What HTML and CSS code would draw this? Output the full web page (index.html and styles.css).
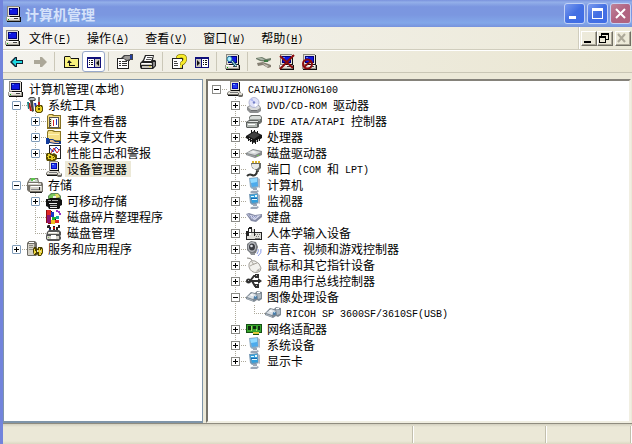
FILE: index.html
```html
<!DOCTYPE html>
<html lang="zh-CN">
<head>
  <meta charset="UTF-8" />
  <meta name="viewport" content="width=device-width, initial-scale=1.0"/>
  <title>计算机管理</title>
  <link rel="stylesheet" href="styles.css">
</head>
<body>
  <svg class="sprites" aria-hidden="true">
    <symbol id="pc" viewBox="0 0 16 16">
      <path fill="#8a887f" d="M1 0h12v11H1z"/>
      <path fill="#e4e1d8" d="M2 1h11v9H2z"/>
      <path fill="#111" d="M13 1h1v10h-1zM4 10h9v1H4z"/>
      <path fill="#00007c" d="M3 2h9v7H3z"/>
      <path fill="#1018e0" d="M4 3h7v5H4z"/>
      <path fill="#5080ff" d="M4 3h2v1H4z"/>
      <path fill="#9b998f" d="M0 11h14v4H0z"/>
      <path fill="#e4e1d8" d="M1 12h12v2H1z"/>
      <path fill="#fff" d="M1 11h12v1H1z"/>
      <path fill="#444" d="M8 12h4v1H8z"/>
      <path fill="#111" d="M14 11h1v5h-1zM1 15h14v1H1z"/>
      <path fill="#0a0" d="M2 13h1v1H2z"/>
    </symbol>
    <symbol id="devmgr" viewBox="0 0 16 16">
      <path fill="#8a887f" d="M3 0h9v10H3z"/>
      <path fill="#e4e1d8" d="M4 1h8v8H4z"/>
      <path fill="#111" d="M12 1h1v9h-1zM4 9h8v1H4z"/>
      <path fill="#0008b8" d="M5 2h6v6H5z"/>
      <path fill="#2438f0" d="M6 3h4v4H6z"/>
      <path fill="#7ab0ff" d="M6 3h2v1H6z"/>
      <path fill="#77756e" d="M2 10h11l1 2v2H0v-2z"/>
      <path fill="#dedbd2" d="M3 10h9l1 2H1z"/>
      <path fill="#777" d="M3 11h8v1H3z"/>
      <path fill="#111" d="M1 14h11v1H1z"/>
      <path fill="#e9e7e0" d="M1 12h10v1H1z"/>
      <path fill="#6e6c66" d="M11 12h4l1 1v2l-1 1h-3l-1-1z"/>
      <path fill="#dedbd2" d="M12 12h3v2h-3z"/>
    </symbol>
    <symbol id="tools" viewBox="0 0 16 16">
      <path fill="#444" d="M1 2l2-2h4l2 2-1 2H6l1 10-2 1-2-11z"/>
      <path fill="#b9c0c5" d="M2 2l2-1h3l1 1-1 1H4L2 3z"/>
      <path fill="#c01818" d="M1 6h2l2 8H3zM11 5h2v3h-2z"/>
      <path fill="#178080" d="M0 5h2v7H1z"/>
      <path fill="#1e38b8" d="M7 6h2l2 9H9z"/>
      <path fill="#777" d="M11 0h2v5h-2z"/>
      <path fill="#5b4d00" d="M10 8h5l1 2v4l-2 2h-4l-2-2v-4z"/>
      <path fill="#e8cf25" d="M10 9h1v1h2V9h1v1h1v4h-1v1h-4v-1H9v-4h1z"/>
      <path fill="#5b4d00" d="M11 11h2v2h-2z"/>
    </symbol>
    <symbol id="events" viewBox="0 0 16 16">
      <path fill="#857022" d="M1 3l2-2h4l1 1h7v14H1z"/>
      <path fill="#f5dd83" d="M2 3l1-1h3l1 1h7v11H2z"/>
      <path fill="#555" d="M3 4h10v11H3z"/>
      <path fill="#fff" d="M6 5h6v9H6z"/>
      <path fill="#ece7c8" d="M4 5h2v9H4z"/>
      <path fill="#222" d="M4 6h1v1H4zM4 8h1v1H4zM4 10h1v1H4zM4 12h1v1H4z"/>
      <path fill="#d42020" d="M7 7h1v6H7z"/>
      <path fill="#2338c0" d="M10 6h1v6h-1z"/>
    </symbol>
    <symbol id="shared" viewBox="0 0 16 16">
      <path fill="#8a7623" d="M1 3l1-2h5l2 1h6v10H1z"/>
      <path fill="#f5df86" d="M2 3l1-1h3l2 1h6v8H2z"/>
      <path fill="#fff4b9" d="M2 5h11v1H2z"/>
      <path fill="#123c9c" d="M0 9h3v6H0z"/>
      <path fill="#16377f" d="M3 10h4l3 2h5v3H9l-5-1H3z"/>
      <path fill="#e9bc91" d="M4 11h3l2 2h4v1H9l-5-1z"/>
    </symbol>
    <symbol id="perf" viewBox="0 0 16 16">
      <path fill="#222" d="M3 0h12v14H3z"/>
      <path fill="#fff" d="M4 1h10v12H4z"/>
      <path fill="none" stroke="#1a30d0" d="M4 3l3 4 3-5 3 3"/>
      <path fill="none" stroke="#d01818" d="M5 8l3-5 3 5 3-4"/>
      <path fill="#5b4d00" d="M1 8h4l1 1 2-1 3 2v4l-2 2H1l-1-2V9z"/>
      <path fill="#e8cf25" d="M2 9h2v1h2v1h2v1h1v2H7v1H5v-1H2v-2H1v-1h1z"/>
      <path fill="#5b4d00" d="M3 11h2v2H3zM7 12h1v1H7z"/>
    </symbol>
    <symbol id="storage" viewBox="0 0 16 16">
      <path fill="#77736a" d="M1 4l2-3h8l1 4h3l1 2v8H2l-2-2V6z"/>
      <path fill="#c9d6c7" d="M2 4l2-2h6l1 3H2z"/>
      <path fill="#5fc34e" d="M4 1h4v3H4z"/>
      <path fill="#fff" d="M6 3h2v1H6z"/>
      <path fill="#d3d0c7" d="M1 6h13v2H1zM3 9h12v5H3z"/>
      <path fill="#fff" d="M2 6h9v1H2zM4 9h10v1H4z"/>
      <path fill="#888" d="M4 12h9v1H4z"/>
      <path fill="#222" d="M12 10h1v3h-1zM3 15h12v1H3z"/>
    </symbol>
    <symbol id="removable" viewBox="0 0 16 16">
      <path fill="#5f8a58" d="M2 3l3-3h7l3 3v4H2z"/>
      <path fill="#79c95b" d="M3 3l3-2h3v4H3z"/>
      <path fill="#e6dc65" d="M9 1h3l2 3-4 1z"/>
      <path fill="#efefef" d="M7 3h3v2H7z"/>
      <path fill="#111" d="M0 6h3l1-1h9l3 2v5l-2 1v2l-1 1H3l-1-2-2-1z"/>
      <path fill="#aaa" d="M2 7h3v1H2zM6 7h6v1H6zM4 12h7v1H4z"/>
      <path fill="#e8e8e8" d="M3 10h8v1H3zM4 14h7v1H4z"/>
    </symbol>
    <symbol id="defrag" viewBox="0 0 16 16">
      <path fill="#e02828" d="M1 1h4v5H1z"/>
      <path fill="#8d1471" d="M1 6h4v8H1z"/>
      <path fill="#1b36c9" d="M5 3h3v5H5z"/>
      <path fill="#1fb32e" d="M6 8h4v3H6z"/>
      <path fill="#efc01f" d="M5 11h4v4H5z"/>
      <path fill="#e02828" d="M9 11h4v3H9z"/>
      <path fill="#14a3a3" d="M10 7h3v3h-3z"/>
      <path fill="#9a36c6" d="M10 1h2v1h2v2h-2V3h-2zM13 4h2v2h-2z"/>
      <path fill="#8c1010" d="M0 1h1v13H0zM2 14h3v1H2z"/>
      <path fill="#111" d="M5 2h1v1H5zM9 10h1v1H9z"/>
    </symbol>
    <symbol id="diskmgmt" viewBox="0 0 16 16">
      <path fill="#222" d="M2 0h2v2h1v3H3V3H1V1zM7 1h2v6H7zM12 0h2v3h-2v3h-2V2h2z"/>
      <path fill="#c01818" d="M7 2h2v2H7z"/>
      <path fill="#233bc0" d="M3 4h2v3H3z"/>
      <path fill="#555" d="M1 7l2-2h10l2 2v3l-1 1 1 1v2l-2 2H2l-2-2v-3z"/>
      <path fill="#d6d3c9" d="M2 7h11v2H2zM1 11h12v3H1z"/>
      <path fill="#fff" d="M3 7h8v1H3zM5 10h5v4H5z"/>
      <path fill="#82ba68" d="M2 12h1v1H2z"/>
    </symbol>
    <symbol id="services" viewBox="0 0 16 16">
      <path fill="#6e6c66" d="M0 2l2-2h6l2 2v12l-1 1H1l-1-1z"/>
      <path fill="#d4d1c7" d="M1 3h6v11H1z"/>
      <path fill="#fff" d="M2 1h5v1H2z"/>
      <path fill="#8d8a81" d="M2 4h4v1H2zM2 6h4v1H2zM2 8h4v1H2zM7 3h1v11H7z"/>
      <path fill="#4c4100" d="M7 6h2l1 2 1-1v-1h4l1 2v4l-2 3h-3l-1-2-1 1H7l-1-3V8z"/>
      <path fill="#eed63b" d="M7 8h1v2h1v2H8v1H7zM12 7h1v2h1V8h1v4h-1v2h-2v-3h-1V9h1z"/>
      <path fill="#ddd" d="M10 9h1v2h-1zM13 10h1v1h-1z"/>
    </symbol>

    <symbol id="cdrom" viewBox="0 0 16 16">
      <path fill="#8e9091" d="M1 10l3-2h9l2 3v3l-3 2H4l-3-3z"/>
      <path fill="#d9dadb" d="M2 10l3-1h8l1 2-3 2H5z"/>
      <circle cx="8" cy="5.500" r="5" fill="#dfe1f8" stroke="#b4b8d4"/>
      <path fill="#aeb6f2" d="M8 5L4 3l2-2z"/>
      <path fill="#fff" d="M8 6l4 2-3 2z"/>
      <circle cx="8" cy="5.500" r="1.200" fill="#7580c8"/>
      <path fill="#6c6e70" d="M5 13h6v1H5z"/>
    </symbol>
    <symbol id="ide" viewBox="0 0 16 16">
      <path fill="#6c706d" d="M3 4l2-2h9l2 2v5l-2 2H4z"/>
      <path fill="#d8dcd9" d="M4 4l2-1h8l1 1v2H4z"/>
      <path fill="#9ba19d" d="M4 6h10v2H4z"/>
      <path fill="#5c605e" d="M0 9l3-2h9l1 2v5l-2 1H1l-1-1z"/>
      <path fill="#e1e4e2" d="M1 9l3-1h8v1z"/>
      <path fill="#b3b9b4" d="M1 10h10v4H1z"/>
      <path fill="#fff" d="M2 11h7v1H2z"/>
    </symbol>
    <symbol id="cpu" viewBox="0 0 16 16">
      <path fill="#151515" d="M0 7l8-5 8 4v3l-8 5-8-5z"/>
      <path fill="#414141" d="M2 7l6-4 6 3-6 4z"/>
      <path fill="none" stroke="#151515" d="M2.500 9v3M4.500 10v3M6.500 11v4M9.500 11v4M11.500 10v3M13.500 8v4M5.500 1v3M8.500 1v2M11.500 2v2"/>
      <path fill="#bbb" d="M3 9h1v1H3zM5 10h1v1H5zM10 11h1v1h-1zM12 10h1v1h-1z"/>
    </symbol>
    <symbol id="disk" viewBox="0 0 16 16">
      <path fill="#85898b" d="M0 8l7-4 9 2v4l-7 3-9-3z"/>
      <path fill="#d4d8d9" d="M1 8l6-3 8 2-6 3z"/>
      <path fill="#f6f6f6" d="M4 7l3-1 4 1-3 1z"/>
      <path fill="#a3a7a8" d="M1 9l8 2v1l-8-2z"/>
      <path fill="#74c454" d="M11 10h2v1h-2z"/>
    </symbol>
    <symbol id="port" viewBox="0 0 16 16">
      <path fill="#ddb528" d="M6 0h2v2H6zM9 0h2v2H9zM12 0h2v2h-2z"/>
      <path fill="#656864" d="M5 2h10v5l-2 2v2h-3V9L6 7z"/>
      <path fill="#e6e8e4" d="M6 3h7v3l-2 2H8L6 6z"/>
      <path fill="none" stroke="#303230" stroke-width="2" d="M11 10c0 4-3 5-5 4s-3-1-5 1"/>
    </symbol>
    <symbol id="computer" viewBox="0 0 16 16">
      <path fill="#88aac4" d="M3 1l9-1 1 10-7 2-2-2z"/>
      <path fill="#4cabed" d="M4 2l7-1 1 8-6 1z"/>
      <path fill="#91daff" d="M4 2l7-1v4L5 6z"/>
      <path fill="#b2bac6" d="M12 1l2 1v9l-2-1z"/>
      <path fill="#9aa6b6" d="M7 11h4v2l2 1-2 2H5l-1-1 3-2z"/>
      <path fill="#e2eaf1" d="M6 13h5v1H6z"/>
    </symbol>
    <symbol id="monitor" viewBox="0 0 16 16">
      <path fill="#7698b4" d="M3 1l9-1 1 10-7 2-2-2z"/>
      <path fill="#32a0dd" d="M4 2l7-1 1 8-6 1z"/>
      <path fill="#e5f9ff" d="M5 3h3v1H5zM9 2h2v2H9zM6 6h5v1H6z"/>
      <path fill="#176bb4" d="M5 5h6v1H5z"/>
      <path fill="#b2bac6" d="M12 1l2 1v9l-2-1z"/>
      <path fill="#9aa6b6" d="M7 11h4v2l2 1-2 2H5l-1-1 3-2z"/>
      <path fill="#e2eaf1" d="M6 13h5v1H6z"/>
    </symbol>
    <symbol id="keyboard" viewBox="0 0 16 16">
      <path fill="#858ba6" d="M0 5l3-1 6 2 7-1v3l-6 5-5-1z"/>
      <path fill="#d6d9ed" d="M1 5l3 1 5 1 6-1-6 5-3-1z"/>
      <path fill="none" stroke="#8189b6" stroke-dasharray="1 1" d="M3 6l4 4M6 7l3 3M9 8l2 1M4 8l8-1"/>
    </symbol>
    <symbol id="hid" viewBox="0 0 16 16">
      <path fill="#222" d="M2 3h1V2h3v2h3v3h7v8H0V6h2z"/>
      <path fill="#deded8" d="M3 4h5v7H3zM9 8h6v6H9zM1 11h8v3H1z"/>
      <path fill="#fff" d="M3 4h2v6H3z"/>
      <path fill="#333" d="M5 4h1v3H5zM3 7h5v1H3z"/>
      <path fill="#777" d="M9 9h1v1H9zM11 9h1v1h-1zM13 9h1v1h-1zM10 11h1v1h-1zM12 11h1v1h-1zM9 13h5v1H9z"/>
    </symbol>
    <symbol id="sound" viewBox="0 0 16 16">
      <path fill="#777a7e" d="M1 3l4-3 5 1 2 5-2 6-5 1-4-4z"/>
      <ellipse cx="6" cy="6" rx="4" ry="5" fill="#b8bbc0"/>
      <ellipse cx="6" cy="6" rx="3" ry="3.500" fill="#3b3d42"/>
      <circle cx="5.500" cy="5" r="1.300" fill="#dfe2e7"/>
      <path fill="none" stroke="#8b9de8" d="M12 8q1 2-1 5M15 8q1 4-3 7"/>
      <path fill="#8d9094" d="M4 12h5v2H5z"/>
    </symbol>
    <symbol id="mouse" viewBox="0 0 16 16">
      <path fill="none" stroke="#85827c" d="M1 1q4-1 6 4"/>
      <path fill="#f2f1ed" stroke="#a09d97" d="M3 7q1-4 6-3 5 2 6 7 0 4-4 4.500Q5 16 3 10z"/>
      <path fill="none" stroke="#aaa69e" d="M4 9q3-2 7-3M8 8L6 5"/>
      <path fill="#bab7b0" d="M11 13l3-2-1 3-3 1z"/>
    </symbol>
    <symbol id="usb" viewBox="0 0 16 16">
      <path fill="none" stroke="#303030" stroke-width="2" d="M2 8h12M4 8l4-5h3M6 8l3 5h3"/>
      <circle cx="2.500" cy="8" r="2.500" fill="#303030"/>
      <path fill="#303030" d="M9 1h4v4H9zM9 11h4v4H9zM12 5l4 3-4 3z"/>
      <path fill="#bbb" d="M2 7h1v1H2zM10 2h1v1h-1zM10 12h1v1h-1z"/>
    </symbol>
    <symbol id="imaging" viewBox="0 0 16 16">
      <path fill="#7c8791" d="M0 8l5-5 4 1 2-2 5 1v7l-3 2-2-1-3 2-8-3z"/>
      <path fill="#dce2e7" d="M1 8l5-4 5 2-4 4z"/>
      <path fill="#adb8c1" d="M1 9l6 2v1L1 10zM11 4l4 1v4l-3 1z"/>
      <path fill="#fff" d="M5 5l3 1-2 1-2-1zM11 3h3v1h-3z"/>
      <circle cx="9.500" cy="8.500" r="1.700" fill="#4d7ea8"/>
      <path fill="#9bd0f4" d="M9 7h1v1H9z"/>
    </symbol>
    <symbol id="nic" viewBox="0 0 16 16">
      <path fill="#145014" d="M0 3h16v9h-3v2H7v-2H0z"/>
      <path fill="#37a52c" d="M1 4h14v7H1z"/>
      <path fill="#112c11" d="M2 5h3v4H2zM7 5h3v3H7zM12 5h2v4h-2z"/>
      <path fill="#9ddf61" d="M5 5h1v5H5zM10 8h1v2h-1z"/>
      <path fill="#e3c73d" d="M7 11h6v2H7z"/>
    </symbol>

    <symbol id="back" viewBox="0 0 16 16">
      <path fill="#123" d="M1 8l5-5h2v3h6v4H8v3H6z"/>
      <path fill="#20d8e0" d="M3 8l4-4v3h6v2H7v3z"/>
    </symbol>
    <symbol id="forward" viewBox="0 0 16 16">
      <path fill="#aca899" d="M15 8l-5-5H8v3H2v4h6v3h2z"/>
    </symbol>
    <symbol id="up" viewBox="0 0 16 16">
      <path fill="#111" d="M1 3l1-1h5l1 2h8v10H1z"/>
      <path fill="#f9f27c" d="M2 3h5l1 2h7v8H2z"/>
      <path fill="#111" d="M6 6l3 3H7v2h5v1H6V9H4z"/>
    </symbol>
    <symbol id="showtree" viewBox="0 0 16 16">
      <path fill="#10107a" d="M1 3h14v11H1z"/>
      <path fill="#fff" d="M2 5h6v8H2z"/>
      <path fill="#c9c6bd" d="M9 5h5v8H9z"/>
      <path fill="#111" d="M3 6h1v1H3zM5 6h2v1H5zM3 8h1v1H3zM5 8h2v1H5zM3 10h1v1H3zM5 10h2v1H5zM13 6v6l-3-3z"/>
    </symbol>
    <symbol id="showpane" viewBox="0 0 16 16">
      <path fill="#10107a" d="M1 3h14v11H1z"/>
      <path fill="#c9c6bd" d="M2 5h5v8H2z"/>
      <path fill="#fff" d="M8 5h6v8H8z"/>
      <path fill="#111" d="M3 6v6l3-3zM9 6h1v1H9zM11 6h2v1h-2zM9 8h1v1H9zM11 8h2v1h-2zM9 10h1v1H9zM11 10h2v1h-2z"/>
    </symbol>
    <symbol id="props" viewBox="0 0 16 16">
      <path fill="#222" d="M0 4h12v11H0z"/>
      <path fill="#fff" d="M1 5h10v9H1z"/>
      <path fill="#333" d="M2 7h2v1H2zM5 7h5v1H5zM2 9h2v1H2zM5 9h5v1H5zM2 11h2v1H2zM5 11h5v1H5z"/>
      <path fill="#444" d="M4 4l3-3h6V0h3v6h-3v1H9L7 5z"/>
      <path fill="#9c9a96" d="M6 4l2-2h5v3l-3 1z"/>
      <path fill="#243e9b" d="M13 1h2v4h-2z"/>
    </symbol>
    <symbol id="print" viewBox="0 0 16 16">
      <path fill="#222" d="M5 1h9l-1 5h2l1 1v5l-3 3H1l-1-2V9l3-3z"/>
      <path fill="#fff" d="M6 2h7l-2 5H4z"/>
      <path fill="#555" d="M7 3h5v1H7zM6 5h5v1H6z"/>
      <path fill="#c9c6bd" d="M1 9h11v2H1zM2 12h10v2H2z"/>
      <path fill="#fff" d="M2 9h9v1H2z"/>
      <path fill="#888" d="M13 8h2v4l-2 1z"/>
      <path fill="#e4d43b" d="M9 12h2v1H9z"/>
    </symbol>
    <symbol id="help" viewBox="0 0 16 16">
      <path fill="#222" d="M1 4h11v11H1z"/>
      <path fill="#fff" d="M2 5h9v9H2z"/>
      <path fill="#444" d="M3 7h3v1H3zM3 9h4v1H3zM3 11h4v1H3z"/>
      <path fill="none" stroke="#6b5f00" stroke-width="4" d="M7 4q0-2 3.500-2t3.500 3-4 5M9 11.500h2"/>
      <path fill="none" stroke="#f8ec29" stroke-width="3" d="M7 4q0-2 3.500-2t3.500 3-4 5M9 12h2"/>
    </symbol>
    <symbol id="scan" viewBox="0 0 16 16">
      <use href="#pc"/>
      <path fill="none" stroke="#13546b" stroke-width="3" d="M7 7l4 5"/>
      <path fill="none" stroke="#d4f4ff" d="M7 7l4 5"/>
      <circle cx="4.500" cy="5" r="2.500" fill="#aeeeff" stroke="#257c9a"/>
    </symbol>
    <symbol id="update" viewBox="0 0 16 16">
      <path fill="#6f7d6a" d="M0 4l6-1 4 2 5-1v2l-4 2-7-1-4-2z"/>
      <path fill="#a9b4a5" d="M1 4h5l3 2-4 0z"/>
      <path fill="#3f7a44" d="M8 6h4v2H8z"/>
      <path fill="#857f72" d="M1 9l6-1 8 3v2l-3 1-5-3-5 1z"/>
      <path fill="#cbc8be" d="M6 9l7 3-2 1z"/>
    </symbol>
    <symbol id="uninstall" viewBox="0 0 16 16">
      <use href="#pc"/>
      <path fill="none" stroke="#8b0d0d" stroke-width="2" d="M1 2l13 12M15 1L1 15"/>
    </symbol>
    <symbol id="disable" viewBox="0 0 16 16">
      <use href="#pc"/>
      <circle cx="5.500" cy="10" r="4.500" fill="none" stroke="#8b0d0d" stroke-width="2"/>
      <path fill="none" stroke="#8b0d0d" stroke-width="2" d="M9 7l-7 6"/>
    </symbol>
  </svg>

  <div class="window">
    <header class="titlebar">
      <svg class="icon"><use href="#pc"/></svg>
      <h1>计算机管理</h1>
      <button class="win-btn" aria-label="最小化"><svg viewBox="0 0 19 19"><path fill="#fff" d="M4 12h7v3H4z"/></svg></button>
      <button class="win-btn" aria-label="最大化"><svg viewBox="0 0 19 19"><path fill="#fff" fill-rule="evenodd" d="M4 4h11v11H4zM5 7v7h9V7z"/></svg></button>
      <button class="win-btn close" aria-label="关闭"><svg viewBox="0 0 19 19"><path stroke="#fff" stroke-width="2" d="M5 5l9 9M14 5l-9 9"/></svg></button>
    </header>

    <nav class="menubar">
      <svg class="icon"><use href="#pc"/></svg>
      <button class="menu">文件<span class="en">(<u>F</u>)</span></button>
      <button class="menu">操作<span class="en">(<u>A</u>)</span></button>
      <button class="menu">查看<span class="en">(<u>V</u>)</span></button>
      <button class="menu">窗口<span class="en">(<u>W</u>)</span></button>
      <button class="menu">帮助<span class="en">(<u>H</u>)</span></button>
      <div class="mdi">
        <button aria-label="最小化子窗口"><svg viewBox="0 0 12 12"><path d="M2 9h7v2H2z"/></svg></button>
        <button aria-label="还原子窗口"><svg viewBox="0 0 12 12"><path fill-rule="evenodd" d="M3 1h8v7H8v3H1V4h2zM4 3v1h4v3h2V3zM2 6v4h5V6z"/></svg></button>
        <button class="mdi-close" aria-label="关闭子窗口" disabled><svg viewBox="0 0 12 12"><path stroke="#aca899" stroke-width="2" d="M2 2l7 8M9 2l-7 8"/></svg></button>
      </div>
    </nav>

    <div class="toolbar">
      <button aria-label="后退"><svg class="icon"><use href="#back"/></svg></button>
      <button aria-label="前进"><svg class="icon"><use href="#forward"/></svg></button>
      <span class="sep"></span>
      <button aria-label="向上"><svg class="icon"><use href="#up"/></svg></button>
      <button class="pressed" aria-label="显示控制台树"><svg class="icon"><use href="#showtree"/></svg></button>
      <span class="sep"></span>
      <button aria-label="属性"><svg class="icon"><use href="#props"/></svg></button>
      <button aria-label="打印"><svg class="icon"><use href="#print"/></svg></button>
      <span class="sep"></span>
      <button aria-label="帮助"><svg class="icon"><use href="#help"/></svg></button>
      <button aria-label="显示操作窗格"><svg class="icon"><use href="#showpane"/></svg></button>
      <span class="sep"></span>
      <button aria-label="扫描硬件改动"><svg class="icon"><use href="#scan"/></svg></button>
      <span class="sep"></span>
      <button aria-label="更新驱动程序"><svg class="icon"><use href="#update"/></svg></button>
      <button aria-label="卸载"><svg class="icon"><use href="#uninstall"/></svg></button>
      <button aria-label="停用"><svg class="icon"><use href="#disable"/></svg></button>
    </div>

    <main class="panes">
      <section class="pane console">
        <div class="row"><svg class="icon"><use href="#pc"/></svg><span class="label">计算机管理<span class="en">(</span>本地<span class="en">)</span></span></div>
        <ul class="tree">
          <li>
            <div class="branch"><button class="twisty open" aria-label="折叠"></button></div>
            <div>
              <div class="row"><svg class="icon"><use href="#tools"/></svg><span class="label">系统工具</span></div>
              <ul class="tree">
                <li><div class="branch"><button class="twisty" aria-label="展开"></button></div><div class="row"><svg class="icon"><use href="#events"/></svg><span class="label">事件查看器</span></div></li>
                <li><div class="branch"><button class="twisty" aria-label="展开"></button></div><div class="row"><svg class="icon"><use href="#shared"/></svg><span class="label">共享文件夹</span></div></li>
                <li><div class="branch"><button class="twisty" aria-label="展开"></button></div><div class="row"><svg class="icon"><use href="#perf"/></svg><span class="label">性能日志和警报</span></div></li>
                <li><div class="branch"></div><div class="row"><svg class="icon"><use href="#devmgr"/></svg><span class="label selected">设备管理器</span></div></li>
              </ul>
            </div>
          </li>
          <li>
            <div class="branch"><button class="twisty open" aria-label="折叠"></button></div>
            <div>
              <div class="row"><svg class="icon"><use href="#storage"/></svg><span class="label">存储</span></div>
              <ul class="tree">
                <li><div class="branch"><button class="twisty" aria-label="展开"></button></div><div class="row"><svg class="icon"><use href="#removable"/></svg><span class="label">可移动存储</span></div></li>
                <li><div class="branch"></div><div class="row"><svg class="icon"><use href="#defrag"/></svg><span class="label">磁盘碎片整理程序</span></div></li>
                <li><div class="branch"></div><div class="row"><svg class="icon"><use href="#diskmgmt"/></svg><span class="label">磁盘管理</span></div></li>
              </ul>
            </div>
          </li>
          <li><div class="branch"><button class="twisty" aria-label="展开"></button></div><div class="row"><svg class="icon"><use href="#services"/></svg><span class="label">服务和应用程序</span></div></li>
        </ul>
      </section>

      <section class="pane devices">
        <ul class="tree">
          <li>
            <div class="branch"><button class="twisty open" aria-label="折叠"></button></div>
            <div>
              <div class="row"><svg class="icon"><use href="#devmgr"/></svg><span class="label"><span class="en">CAIWUJIZHONG100</span></span></div>
              <ul class="tree">
                <li><div class="branch"><button class="twisty" aria-label="展开"></button></div><div class="row"><svg class="icon"><use href="#cdrom"/></svg><span class="label"><span class="en">DVD/CD-ROM </span>驱动器</span></div></li>
                <li><div class="branch"><button class="twisty" aria-label="展开"></button></div><div class="row"><svg class="icon"><use href="#ide"/></svg><span class="label"><span class="en">IDE ATA/ATAPI </span>控制器</span></div></li>
                <li><div class="branch"><button class="twisty" aria-label="展开"></button></div><div class="row"><svg class="icon"><use href="#cpu"/></svg><span class="label">处理器</span></div></li>
                <li><div class="branch"><button class="twisty" aria-label="展开"></button></div><div class="row"><svg class="icon"><use href="#disk"/></svg><span class="label">磁盘驱动器</span></div></li>
                <li><div class="branch"><button class="twisty" aria-label="展开"></button></div><div class="row"><svg class="icon"><use href="#port"/></svg><span class="label">端口<span class="en"> (COM </span>和<span class="en"> LPT)</span></span></div></li>
                <li><div class="branch"><button class="twisty" aria-label="展开"></button></div><div class="row"><svg class="icon"><use href="#computer"/></svg><span class="label">计算机</span></div></li>
                <li><div class="branch"><button class="twisty" aria-label="展开"></button></div><div class="row"><svg class="icon"><use href="#monitor"/></svg><span class="label">监视器</span></div></li>
                <li><div class="branch"><button class="twisty" aria-label="展开"></button></div><div class="row"><svg class="icon"><use href="#keyboard"/></svg><span class="label">键盘</span></div></li>
                <li><div class="branch"><button class="twisty" aria-label="展开"></button></div><div class="row"><svg class="icon"><use href="#hid"/></svg><span class="label">人体学输入设备</span></div></li>
                <li><div class="branch"><button class="twisty" aria-label="展开"></button></div><div class="row"><svg class="icon"><use href="#sound"/></svg><span class="label">声音、视频和游戏控制器</span></div></li>
                <li><div class="branch"><button class="twisty" aria-label="展开"></button></div><div class="row"><svg class="icon"><use href="#mouse"/></svg><span class="label">鼠标和其它指针设备</span></div></li>
                <li><div class="branch"><button class="twisty" aria-label="展开"></button></div><div class="row"><svg class="icon"><use href="#usb"/></svg><span class="label">通用串行总线控制器</span></div></li>
                <li>
                  <div class="branch"><button class="twisty open" aria-label="折叠"></button></div>
                  <div>
                    <div class="row"><svg class="icon"><use href="#imaging"/></svg><span class="label">图像处理设备</span></div>
                    <ul class="tree">
                      <li><div class="branch"></div><div class="row"><svg class="icon"><use href="#imaging"/></svg><span class="label"><span class="en">RICOH SP 3600SF/3610SF(USB)</span></span></div></li>
                    </ul>
                  </div>
                </li>
                <li><div class="branch"><button class="twisty" aria-label="展开"></button></div><div class="row"><svg class="icon"><use href="#nic"/></svg><span class="label">网络适配器</span></div></li>
                <li><div class="branch"><button class="twisty" aria-label="展开"></button></div><div class="row"><svg class="icon"><use href="#computer"/></svg><span class="label">系统设备</span></div></li>
                <li><div class="branch"><button class="twisty" aria-label="展开"></button></div><div class="row"><svg class="icon"><use href="#monitor"/></svg><span class="label">显示卡</span></div></li>
              </ul>
            </div>
          </li>
        </ul>
      </section>
    </main>

    <footer class="statusbar">
      <span class="status-main"></span>
      <span class="status-mid"></span>
      <span class="status-end"></span>
    </footer>
  </div>
</body>
</html>
```

FILE: styles.css
```css
* {
  box-sizing: border-box;
}

body {
  margin: 0;
  background-color: #ece9d8;
  font-family: "Noto Sans CJK SC", sans-serif;
  font-size: 12px;
  line-height: 16px;
  color: #000;
}

button {
  margin: 0;
  padding: 0;
  border: none;
  background: none;
  font: inherit;
  color: inherit;
}

.sprites {
  display: none;
}

.icon {
  display: block;
  flex: none;
  width: 16px;
  height: 16px;
}

/* half-width latin next to the 12px hanzi */
.en {
  font-family: "Liberation Mono", monospace;
  font-size: 10px;
  line-height: 12px;
  vertical-align: 1px;
  white-space: pre;
}

.window {
  display: flex;
  flex-direction: column;
  min-height: 100vh;
  border-left: 3px solid #7284dc;
}

/* title bar */
.titlebar {
  display: flex;
  align-items: center;
  gap: 2px;
  height: 27px;
  padding: 0 1px 0 3px;
  background: linear-gradient(#7a92dd, #93afe9 8%, #7b96e0 25%, #7b97e0 55%, #82a7e9 85%, #7792dc);
}

.titlebar h1 {
  flex: 1;
  margin: 0 0 0 1px;
  font-size: 14px;
  line-height: 20px;
  font-weight: bold;
  color: #d5e2fa;
}

.win-btn {
  width: 21px;
  height: 21px;
  border: 1px solid #c3d2f6;
  border-radius: 3px;
  background: linear-gradient(135deg, #7b9bee, #4470e3 50%, #3f6ce6);
}

.win-btn svg {
  display: block;
  width: 19px;
  height: 19px;
}

.win-btn.close {
  background: linear-gradient(135deg, #bf8499, #b16482 50%, #b0637c);
}

/* menu */
.menubar {
  display: flex;
  align-items: center;
  height: 23px;
  padding-left: 2px;
  border-bottom: 1px solid #d0cdbd;
  background: linear-gradient(to right, #f5f4f1, #ece9d8);
}

.menu {
  padding: 0 8px;
}

.mdi {
  display: flex;
  align-self: stretch;
  align-items: center;
  margin-left: auto;
  padding: 0 1px 0 2px;
  border-left: 1px solid #d0cdbd;
  box-shadow: inset 1px 0 #fff;
}

.mdi button {
  width: 16px;
  height: 15px;
  border: 1px solid;
  border-color: #fff #716f64 #716f64 #fff;
  box-shadow: inset -1px -1px #aca899;
}

.mdi svg {
  display: block;
  width: 12px;
  height: 12px;
}

.mdi .mdi-close {
  margin-left: 2px;
}

/* toolbar */
.toolbar {
  display: flex;
  align-items: center;
  height: 23px;
  padding-left: 2px;
  border-top: 1px solid #fff;
  border-bottom: 1px solid #c9c6b5;
  background: linear-gradient(to right, #f3f2ec, #eae6d2);
}

.toolbar button {
  display: grid;
  place-items: center;
  width: 23px;
  height: 21px;
}

.toolbar .pressed {
  border: 1px solid #98a9cb;
  border-radius: 3px;
  background-color: #fff;
}

.sep {
  width: 1px;
  height: 19px;
  margin: 0 4px 0 3px;
  background-color: #cbc8b8;
}

/* panes */
.panes {
  display: flex;
  flex: 1;
  gap: 3px;
  padding: 6px 1px 0 0;
}

.pane {
  background-color: #fff;
}

.console {
  flex: 0 0 200px;
  padding: 1px 0 0 4px;
  border: 1px solid #7f95a9;
  border-bottom-width: 2px;
}

.devices {
  flex: 1;
  border: 2px solid;
  border-color: #85827a #f1efe2 #f1efe2 #77746a;
}

.tree {
  margin: 0;
  padding: 0;
  list-style: none;
}

.tree li {
  display: grid;
  grid-template-columns: 19px 1fr;
}

.row {
  display: flex;
  height: 16px;
}

.label {
  margin-left: 3px;
  padding: 0 4px 0 2px;
  white-space: nowrap;
}

.label.selected {
  background-color: #ece9d8;
}

/* dotted connector lines, the twisty sits on the crossing */
.branch {
  padding: 4px 0 0 4px;
  background-image:
    repeating-linear-gradient(#aca899 0 1px, transparent 1px 2px),
    repeating-linear-gradient(to right, #aca899 0 1px, transparent 1px 2px);
  background-repeat: no-repeat;
  background-size: 1px 100%, 11px 1px;
  background-position: 8px 0, 8px 8px;
}

.tree li:last-child > .branch {
  background-size: 1px 8px, 11px 1px;
}

.devices > .tree > li > .branch {
  background-size: 0 0, 11px 1px;
}

.twisty {
  display: block;
  width: 9px;
  height: 9px;
  border: 1px solid #8a8a86;
  background:
    linear-gradient(#000, #000) center / 5px 1px no-repeat,
    linear-gradient(#000, #000) center / 1px 5px no-repeat,
    #fff;
}

.twisty.open {
  background:
    linear-gradient(#000, #000) center / 5px 1px no-repeat,
    #fff;
}

.console .twisty {
  border-color: #7f9bb8;
  border-radius: 1px;
}

/* status bar */
.statusbar {
  display: flex;
  height: 21px;
  padding: 2px 1px 1px 0;
  border-top: 1px solid #8f8c7f;
  background: linear-gradient(#d2cfbf, #ebe8d7 3px, #ebe8d7 17px, #dcd8c2);
}

.statusbar span {
  border-right: 1px solid #c2bfad;
  box-shadow: 1px 0 #fff;
}

.status-main {
  flex: 1;
}

.status-mid {
  width: 133px;
}

.status-end {
  width: 85px;
}
```
